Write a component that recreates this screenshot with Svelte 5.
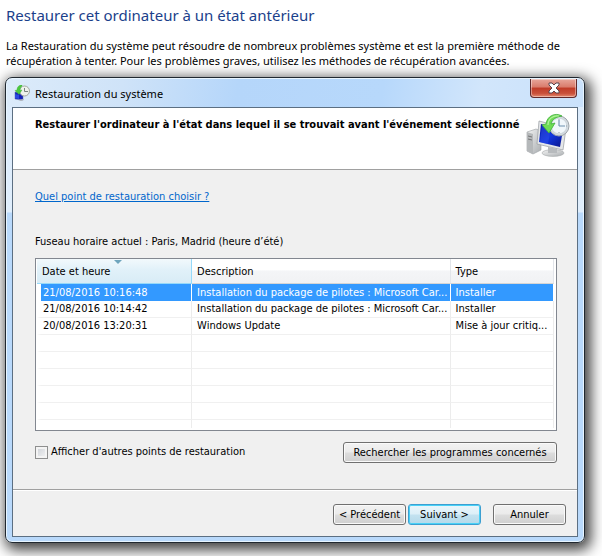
<script lang="ts">
type RestorePoint = { date: string; description: string; type: string };

const points: RestorePoint[] = [
    { date: '21/08/2016 10:16:48', description: 'Installation du package de pilotes : Microsoft Car...', type: 'Installer' },
    { date: '21/08/2016 10:14:42', description: 'Installation du package de pilotes : Microsoft Car...', type: 'Installer' },
    { date: '20/08/2016 13:20:31', description: 'Windows Update', type: 'Mise à jour critiq...' },
];
const emptyRows = [1, 2, 3, 4, 5];

let selected: number = $state(0);
let showMore: boolean = $state(false);
</script>

<main>
    <h1>Restaurer cet ordinateur à un état antérieur</h1>
    <p class="intro">La Restauration du système peut résoudre de nombreux problèmes système et est la première méthode de récupération à tenter. Pour les problèmes graves, utilisez les méthodes de récupération avancées.</p>

    <section class="window" aria-label="Restauration du système">
        <header class="titlebar">
            <svg class="small-icon" viewBox="0 0 16 16" aria-hidden="true">
                <path d="M1 7l8 1v7l-8-1z" fill="#1422b8" stroke="#5f68b0" stroke-width=".5" />
                <path d="M1 9l4 1v4l-4-1z" fill="#2c48e0" />
                <path d="M4 15l5-1 1 1-3 1z" fill="#aeb2b6" />
                <circle cx="10.5" cy="6" r="5" fill="#eef2ec" stroke="#a3a89f" />
                <path d="M10.5 3v3.500H14" fill="none" stroke="#7a8480" />
                <path d="M8 0C5 0 3 2 3 5L1 5.500l4 4 3-4.500-2 .2C6 3 7 2 8 1z" fill="#4cc93c" stroke="#3fae38" stroke-width=".4" />
            </svg>
            <span class="title">Restauration du système</span>
            <button class="close" aria-label="Fermer">
                <svg viewBox="0 0 14 12" aria-hidden="true">
                    <path d="M2 1h3l2 2 2-2h3v2L9 6l3 3v2H9L7 9l-2 2H2V9l3-3-3-3z" fill="#fff" stroke="#5b4650" />
                </svg>
            </button>
        </header>

        <div class="content">
            <div class="banner">
                <h2>Restaurer l'ordinateur à l'état dans lequel il se trouvait avant l'événement sélectionné</h2>
                <svg class="large-icon" viewBox="0 0 44 44" aria-hidden="true">
                    <defs>
                        <linearGradient id="screen" x1="0" y1="0" x2="1" y2="1">
                            <stop offset="0" stop-color="#0718a0" />
                            <stop offset="0.5" stop-color="#1238e0" />
                            <stop offset="1" stop-color="#0a1488" />
                        </linearGradient>
                        <linearGradient id="metal" x1="0" y1="0" x2="1" y2="1">
                            <stop offset="0" stop-color="#f4f4f4" />
                            <stop offset="1" stop-color="#a9adb0" />
                        </linearGradient>
                    </defs>
                    <path d="M1 19l9-3 5 2v19l-8 4-6-3z" fill="url(#metal)" stroke="#9b9fa2" stroke-width=".6" />
                    <path d="M1 19l6 2v20l-6-3z" fill="#b5b8ba" />
                    <path d="M2 23l4 1M2 26l4 1" stroke="#666" stroke-width=".8" />
                    <ellipse cx="27" cy="40" rx="11" ry="3.4" fill="url(#metal)" stroke="#a8abad" stroke-width=".6" />
                    <path d="M22 34l9 2v4h-9z" fill="#b7babd" />
                    <path d="M13 8l27 7-3 22-26-6z" fill="#e5e7e9" stroke="#969b9f" stroke-width=".7" />
                    <path d="M15 11l22 6-3 17-21-5z" fill="url(#screen)" />
                    <path d="M16 12l9 2-3 17-8-2z" fill="#3755e8" opacity=".4" />
                    <circle cx="33" cy="13" r="10" fill="#d3dadf" stroke="#9ea5aa" />
                    <circle cx="33" cy="13" r="7.8" fill="#f1f7fb" stroke="#c1cbd1" stroke-width=".6" />
                    <path d="M33 13V7M33 13h6" stroke="#6d8fae" stroke-width="1.1" fill="none" />
                    <path d="M33 6v1M33 19v1M26 13h1M40 13h1" stroke="#71808c" stroke-width=".7" />
                    <path d="M36 3C29-1 21 3 20 11l-4 1 7 8 6-10-4 1c1-5 5-7 11-8z" fill="#6fdc55" stroke="#3dae38" stroke-width=".8" />
                    <path d="M33 3c-6-1-11 3-11 9" fill="none" stroke="#b3f29f" stroke-width="1.2" />
                </svg>
            </div>

            <div class="body">
                <a href="#aide">Quel point de restauration choisir ?</a>
                <p class="zone">Fuseau horaire actuel : Paris, Madrid (heure d’été)</p>

                <div class="list">
                    <table>
                        <colgroup>
                            <col class="col-date" />
                            <col class="col-description" />
                            <col class="col-type" />
                        </colgroup>
                        <thead>
                            <tr>
                                <th class="sorted">Date et heure</th>
                                <th>Description</th>
                                <th>Type</th>
                            </tr>
                        </thead>
                        <tbody>
                            {#each points as point, i}
                                <tr class:selected={selected === i} onclick={() => (selected = i)}>
                                    <td>{point.date}</td>
                                    <td>{point.description}</td>
                                    <td>{point.type}</td>
                                </tr>
                            {/each}
                            {#each emptyRows as row (row)}
                                <tr><td></td><td></td><td></td></tr>
                            {/each}
                            <tr class="rest"><td></td><td></td><td></td></tr>
                        </tbody>
                    </table>
                </div>

                <div class="options">
                    <label>
                        <input type="checkbox" bind:checked={showMore} />
                        Afficher d'autres points de restauration
                    </label>
                    <button class="btn wide">Rechercher les programmes concernés</button>
                </div>
            </div>

            <footer>
                <button class="btn">&lt; Précédent</button>
                <button class="btn default">Suivant &gt;</button>
                <button class="btn cancel">Annuler</button>
            </footer>
        </div>
    </section>
</main>

<style>
:global(body) {
    margin: 0;
    background: #fff;
}

main {
    padding: 4px 17px 14px 5px;
    overflow: hidden;
    color: #000;
    font-family: "Noto Sans", "Open Sans", sans-serif;
}

h1 {
    margin: 0;
    padding-left: 1px;
    color: #1b3f8b;
    font-size: 15px;
    font-weight: normal;
    line-height: 22px;
}

.intro {
    margin: 12px 0 9px;
    padding-left: 1px;
    font-size: 11px;
    line-height: 15px;
}

.window {
    box-sizing: border-box;
    padding: 0 6px 5px;
    border: 1px solid #202830;
    border-radius: 7px;
    background: linear-gradient(#dcebfb 0, #e0eefc 134px, #b9d9fb 135px);
    box-shadow: inset 0 0 0 1px #e8f5ff, 3px 4px 14px 3px rgba(0, 0, 0, 0.75);
}

.titlebar {
    display: flex;
    align-items: center;
    height: 28px;
    margin: 1px -5px 0;
    padding-left: 7px;
    border-radius: 6px 6px 0 0;
    background: linear-gradient(100deg, #dcebfa 0, #cfe3f8 20%, #b5d6fa 40%, #b7d8fb 65%, #d2e6fb 82%, #c9e1fb 100%);
}

.small-icon {
    width: 16px;
    height: 16px;
    margin-right: 5px;
}

.title {
    font-size: 11px;
}

.close {
    display: flex;
    align-self: flex-start;
    align-items: center;
    justify-content: center;
    width: 47px;
    height: 19px;
    margin: 0 6px 0 auto;
    padding: 0;
    border: 1px solid #602a2c;
    border-top: 0;
    border-radius: 0 0 4px 4px;
    background: linear-gradient(#e8a79b 0, #d97b6b 45%, #c03b27 50%, #c9513b 80%, #e48a70 100%);
    box-shadow: inset 0 0 0 1px rgba(255, 255, 255, 0.4);
}

.close svg {
    width: 14px;
    height: 12px;
}

.content {
    border: 1px solid #5c6f82;
    background: #f0f0f0;
    font-family: "DejaVu Sans Condensed", "DejaVu Sans", sans-serif;
    font-size: 11px;
    line-height: 14px;
}

.banner {
    display: flex;
    justify-content: space-between;
    height: 61px;
    padding: 0 7px 0 22px;
    border-bottom: 1px solid #a0a0a0;
    background: #fff;
}

h2 {
    margin: 10px 0 0;
    font-size: 11px;
    line-height: 14px;
    white-space: nowrap;
}

.large-icon {
    flex: none;
    width: 44px;
    height: 44px;
    margin-top: 5px;
}

.body {
    padding: 20px 20px 26px 22px;
}

a {
    color: #0066cc;
}

.zone {
    margin: 31px 0 9px;
}

.list {
    padding: 0 2px 2px 1px;
    border: 1px solid #828790;
    background: #fff;
}

table {
    width: 100%;
    border-collapse: separate;
    border-spacing: 0;
    table-layout: fixed;
}

.col-date {
    width: 30%;
}

.col-type {
    width: 20%;
}

th {
    position: relative;
    box-sizing: border-box;
    height: 25px;
    padding: 2px 5px 0;
    border-right: 1px solid #e2e5ea;
    border-bottom: 1px solid #d5d5d5;
    background: linear-gradient(#fff 45%, #f4f5f7 50%, #f1f2f4);
    font-weight: normal;
    text-align: left;
}

th.sorted {
    border-color: #96d9f9;
    background: linear-gradient(#f2f9fc, #e1f1f9 45%, #d8ecf6);
}

th.sorted::after {
    position: absolute;
    top: 1px;
    left: 50%;
    border: 4px solid transparent;
    border-top-color: #6fa5bd;
    border-bottom: 0;
    content: "";
}

td {
    box-sizing: border-box;
    height: 17px;
    padding: 0 5px;
    overflow: hidden;
    border-right: 1px solid #ececec;
    border-bottom: 1px solid #f0f0f0;
    line-height: 16px;
    white-space: nowrap;
}

td:first-child {
    padding-left: 2px;
    border-left: 4px solid #fff;
}

.rest td {
    height: 8px;
    border-bottom: 0;
}

.selected td {
    border-right-color: #fff;
    border-bottom: 0;
    background: #3399ff;
    color: #fff;
}

.options {
    display: flex;
    align-items: flex-start;
    justify-content: space-between;
    margin-top: 11px;
}

label {
    display: flex;
    align-items: center;
    gap: 3px;
    padding-top: 3px;
}

input {
    width: 13px;
    height: 13px;
    margin: 0;
    border: 1px solid #8e8f8f;
    background: linear-gradient(135deg, #cbcfd5, #f6f6f6);
    box-shadow: inset 0 0 0 2px #f4f4f4;
    appearance: none;
}

input:checked {
    background: #4b6097;
}

.btn {
    box-sizing: border-box;
    width: 73px;
    height: 21px;
    padding: 0;
    border: 1px solid #707070;
    border-radius: 3px;
    background: linear-gradient(#f2f2f2 0, #ebebeb 48%, #dddddd 52%, #cfcfcf 100%);
    box-shadow: inset 0 0 0 1px #fafafa;
    color: #000;
    font: inherit;
    white-space: nowrap;
}

.btn.wide {
    width: 214px;
}

.btn.default {
    border-color: #3c9fd1;
    background: linear-gradient(#eaf6fb 0, #dceff8 48%, #c3e2f0 52%, #b4d9ea 100%);
    box-shadow: inset 0 0 0 1px #48d1f7;
}

footer {
    display: flex;
    justify-content: flex-end;
    gap: 2px;
    padding: 14px 11px 11px;
    border-top: 1px solid #a0a0a0;
    box-shadow: inset 0 1px #fff;
}

.cancel {
    margin-left: 10px;
}
</style>
